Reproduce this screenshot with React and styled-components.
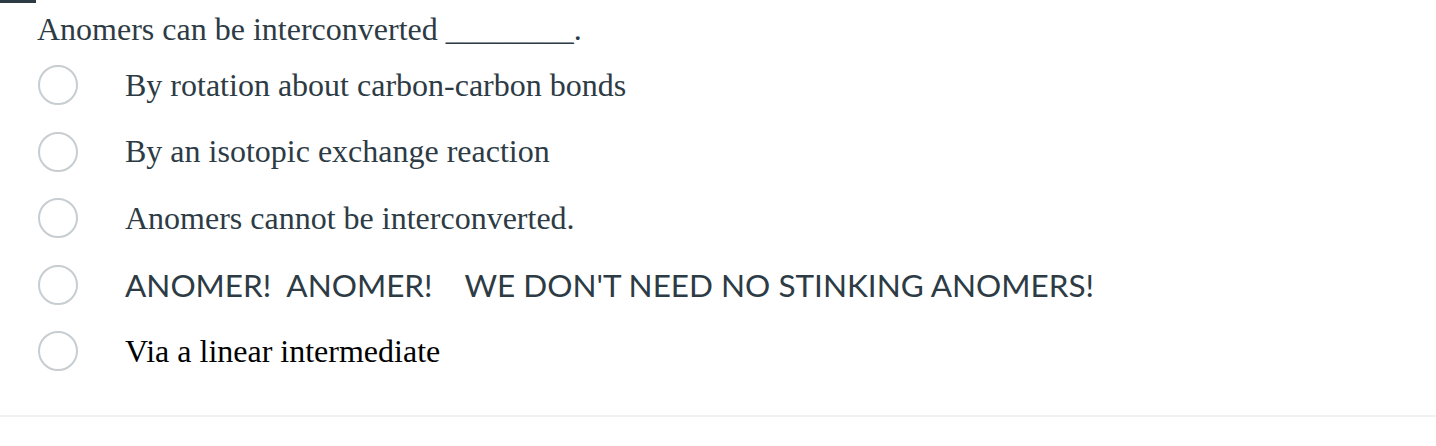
import { createGlobalStyle, styled } from "styled-components";

const GlobalStyle = createGlobalStyle`
    body {
        margin: 0;
        background: #fff;
    }
`;

const answers = [
    { text: "By rotation about carbon-carbon bonds" },
    { text: "By an isotopic exchange reaction" },
    { text: "Anomers cannot be interconverted." },
    { text: "ANOMER!  ANOMER!    WE DON'T NEED NO STINKING ANOMERS!", sans: true },
    { text: "Via a linear intermediate", black: true },
];

function App() {
    return (
        <>
            <GlobalStyle />
            <Wrapper>
                <TopTab />
                <Question>Anomers can be interconverted ________.</Question>
                <AnswerList>
                    {answers.map((a) => (
                        <Answer key={a.text}>
                            <Radio />
                            <AnswerText $sans={a.sans} $black={a.black}>
                                {a.text}
                            </AnswerText>
                        </Answer>
                    ))}
                </AnswerList>
                <Divider />
            </Wrapper>
        </>
    );
}

const Wrapper = styled.div`
    width: 1436px;
    height: 446px;
    display: flex;
    flex-direction: column;
`;

const TopTab = styled.div`
    width: 36px;
    height: 3px;
    background: #2d3b45;
`;

const Question = styled.div`
    font-family: "Liberation Serif", "Times New Roman", serif;
    font-size: 32px;
    line-height: 40px;
    color: #2d3b45;
    padding-left: 37px;
    margin-top: 6px;
    white-space: pre;
`;

const AnswerList = styled.div`
    display: flex;
    flex-direction: column;
    margin-top: 3px;
`;

const Answer = styled.div`
    display: flex;
    align-items: center;
    height: 66.5px;
`;

const Radio = styled.span`
    box-sizing: border-box;
    width: 40px;
    height: 40px;
    margin-left: 38px;
    border: 2px solid #c7cdd1;
    border-radius: 50%;
    flex-shrink: 0;
`;

const AnswerText = styled.span`
    margin-left: 47px;
    white-space: pre;
    font-family: ${(p) => (p.$sans ? "Lato, sans-serif" : "\"Liberation Serif\", \"Times New Roman\", serif")};
    font-size: ${(p) => (p.$sans ? "31.5px" : "32px")};
    color: ${(p) => (p.$black ? "#000" : "#2d3b45")};
`;

const Divider = styled.div`
    margin-top: 30px;
    height: 2px;
    background: #f1f1f1;
`;

export default App;
